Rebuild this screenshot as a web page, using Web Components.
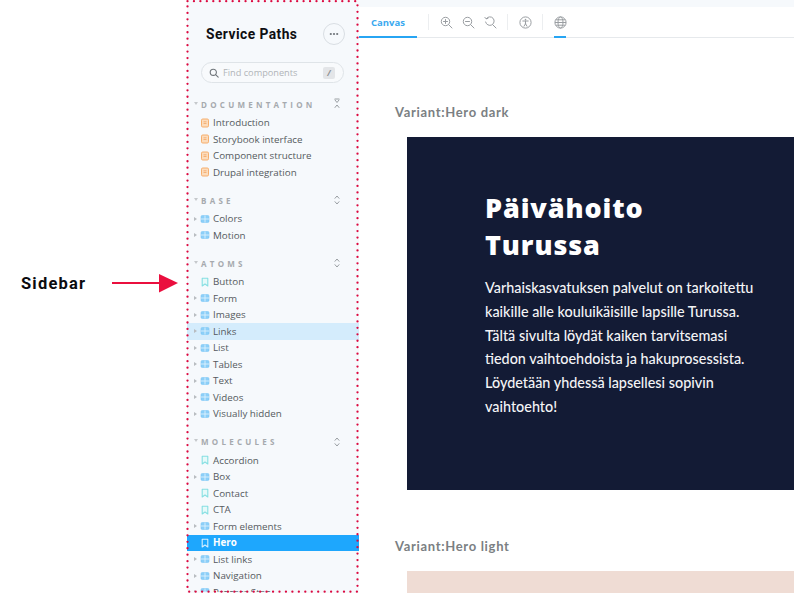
<!DOCTYPE html>
<html lang="fi"><head><meta charset="utf-8"><title>Sidebar</title>
<style>
html,body{margin:0;padding:0;background:#fff}
body{width:794px;height:593px;overflow:hidden;font-family:"Open Sans","Liberation Sans",sans-serif}
</style></head><body>
<sb-page>
  <sb-callout slot="callout">Sidebar</sb-callout>
  <sb-sidebar slot="sidebar" title="Service Paths">
    <sb-section name="Documentation" toggle="collapse">
      <sb-item kind="doc">Introduction</sb-item>
      <sb-item kind="doc">Storybook interface</sb-item>
      <sb-item kind="doc">Component structure</sb-item>
      <sb-item kind="doc">Drupal integration</sb-item>
    </sb-section>
    <sb-section name="Base">
      <sb-item kind="comp">Colors</sb-item>
      <sb-item kind="comp">Motion</sb-item>
    </sb-section>
    <sb-section name="Atoms">
      <sb-item kind="story">Button</sb-item>
      <sb-item kind="comp">Form</sb-item>
      <sb-item kind="comp">Images</sb-item>
      <sb-item kind="comp" state="hover">Links</sb-item>
      <sb-item kind="comp">List</sb-item>
      <sb-item kind="comp">Tables</sb-item>
      <sb-item kind="comp">Text</sb-item>
      <sb-item kind="comp">Videos</sb-item>
      <sb-item kind="comp">Visually hidden</sb-item>
    </sb-section>
    <sb-section name="Molecules">
      <sb-item kind="story">Accordion</sb-item>
      <sb-item kind="comp">Box</sb-item>
      <sb-item kind="story">Contact</sb-item>
      <sb-item kind="story">CTA</sb-item>
      <sb-item kind="comp">Form elements</sb-item>
      <sb-item kind="story" state="active">Hero</sb-item>
      <sb-item kind="comp">List links</sb-item>
      <sb-item kind="comp">Navigation</sb-item>
      <sb-item kind="comp">Process Step</sb-item>
    </sb-section>
  </sb-sidebar>
  <sb-toolbar slot="main"></sb-toolbar>
  <sb-variant slot="main" name="Variant:Hero dark" style="padding-top:66px">
    <sb-hero tone="dark" heading="Päivähoito Turussa">Varhaiskasvatuksen palvelut on tarkoitettu kaikille alle kouluikäisille lapsille Turussa. Tältä sivulta löydät kaiken tarvitsemasi tiedon vaihtoehdoista ja hakuprosessista. Löydetään yhdessä lapsellesi sopivin vaihtoehto!</sb-hero>
  </sb-variant>
  <sb-variant slot="main" name="Variant:Hero light">
    <sb-hero tone="light"></sb-hero>
  </sb-variant>
</sb-page>
<script>
function def(name, html, setup){
  customElements.define(name, class extends HTMLElement{
    connectedCallback(){
      if(this.shadowRoot) return;
      const r=this.attachShadow({mode:'open'});
      r.innerHTML = typeof html==='function' ? html(this) : html;
      if(setup) setup(this,r);
    }
  });
}
def('sb-page',`<style>
:host{display:grid;grid-template-columns:187px 172px 435px;width:794px;height:593px;overflow:hidden}
.main{display:block;min-width:0;overflow:hidden;height:593px}
</style>
<slot name="callout"></slot><slot name="sidebar"></slot><div class="main"><slot name="main"></slot></div>`);

def('sb-callout',`<style>
:host{display:flex;align-items:center;height:593px;box-sizing:border-box;padding:0 9px 0 21px;font:700 16.500px/18px Roboto,"Liberation Sans",sans-serif;color:#0b0b0f;letter-spacing:1.200px}
.w{display:flex;align-items:center;justify-content:space-between;width:100%;transform:translateY(-13px)}
svg{display:block}
</style><div class="w"><span><slot></slot></span>
<svg width="66" height="19" viewBox="1 0 66 19"><path d="M0 8h49V9.900H0z" fill="#ea0f3e"/><path d="M48 0l19 9-19 9.500z" fill="#ea0f3e"/></svg></div>`);

def('sb-sidebar',h=>`<style>
:host{display:block;position:relative;height:593px;overflow:visible;background:#f6f9fc;font-family:"Open Sans","Liberation Sans",sans-serif}
.clip{height:592px;overflow:hidden}
.head{display:flex;align-items:center;justify-content:space-between;height:25px;padding:21px 14px 0 19px}
h1{margin:0;font:700 13.800px/20px Roboto,"Liberation Sans",sans-serif;letter-spacing:.45px;color:#0e0e12}
.more{width:20px;height:20px;border:1px solid #d9dee3;border-radius:50%;display:flex;align-items:center;justify-content:center;box-sizing:content-box;background:#f6f9fc}
.search{display:flex;align-items:center;margin:16px 15px 0 14px;height:19px;border:1px solid #dfe4e8;border-radius:11px;padding:0 8px 0 7px;gap:4px;font-size:9.200px;color:#b0b4b8;background:#f8fafc}
.search span{flex:1;white-space:nowrap}
kbd{width:12px;height:12px;background:#e3e5e8;border-radius:2px;font:700 8px/12px "Open Sans",sans-serif;color:#8b8e92;text-align:center;font-style:italic}
.list{padding-top:12.500px}
svg.frame{position:absolute;left:0;top:0;width:172px;height:593px;pointer-events:none;overflow:visible}
</style>
<div class="clip">
<div class="head"><h1>${h.getAttribute('title')}</h1>
<div class="more"><svg width="10" height="4" viewBox="0 0 10 4"><g fill="#6d7378"><circle cx="1.800" cy="2" r="1.100"/><circle cx="5" cy="2" r="1.100"/><circle cx="8.200" cy="2" r="1.100"/></g></svg></div></div>
<div class="search"><svg width="10" height="10" viewBox="0 0 10 10" fill="none" stroke="#6f757a" stroke-width="1.100"><circle cx="4.300" cy="4.300" r="3.100"/><path d="M6.600 6.600L9.200 9.200" stroke-linecap="round"/></svg><span>Find components</span><kbd>/</kbd></div>
<div class="list"><slot></slot></div>
</div>
<svg class="frame" viewBox="0 0 172 593"><rect x="0.500" y="1.200" width="170" height="590.500" fill="none" stroke="#dc0a40" stroke-width="2.300" stroke-linecap="round" stroke-dasharray="0 6.450"/></svg>`);

def('sb-section',h=>{
  const collapse=h.getAttribute('toggle')==='collapse';
  const path=collapse?'M2 1h4M2 2l2 2.500 2-2.500M2 9.500l2-2.500 2 2.500':'M2 4.300l2-2.300 2 2.300M2 7.700l2 2.300 2-2.300';
  return `<style>
:host{display:block;margin-bottom:11px}
.t{display:flex;align-items:center;height:18px;padding:0 18px 0 7px;margin-bottom:1px}
.c{width:0;height:0;border-left:2.500px solid transparent;border-right:2.500px solid transparent;border-top:3px solid #c5c9cc;margin-right:3px;margin-top:-3px}
b{flex:1;font:700 8px/18px "Open Sans",sans-serif;letter-spacing:3.250px;color:#a6aaae;text-transform:uppercase;white-space:nowrap}
svg{display:block;margin-top:-1px}
</style><div class="t"><i class="c"></i><b>${h.getAttribute('name')}</b><svg width="8" height="12" viewBox="0 0 8 12" fill="none" stroke="#8e9499" stroke-width=".9" stroke-linecap="round" stroke-linejoin="round"><path d="${path}"/></svg></div><slot></slot>`;
});

const ICONS={
 doc:'<rect x="1.500" y="1" width="7" height="8" rx="1.200" fill="#fcdcbc" stroke="#f6ae6c"/><path d="M3.500 3.800h3M3.500 5.500h3" stroke="#f2a664" stroke-width=".8"/>',
 comp:'<rect x="1" y="1.500" width="8" height="7" rx="1.300" fill="#8ccff8" stroke="#7cc8f7" stroke-width=".6"/><path d="M5 1.500v7M1 5h8" stroke="#e6f5fe" stroke-width=".8"/>',
 story:'<path d="M2.200 1.200h5.600v7.800L5 7 2.200 9z" fill="#e6f9f9" stroke="#86dfe2" stroke-width="1.100" stroke-linejoin="round"/>'
};
def('sb-item',h=>{
  const k=h.getAttribute('kind'), s=h.getAttribute('state')||'';
  const active=s==='active';
  let ic=ICONS[k];
  if(active) ic='<path d="M2.200 1.200h5.600v7.800L5 7 2.200 9z" fill="none" stroke="#d5efff" stroke-width="1.100" stroke-linejoin="round"/>';
  return `<style>
:host{display:flex;align-items:center;height:16.500px;width:173px;font-size:9.800px;color:${active?'#fff':'#55595e'};font-weight:${active?700:400};background:${active?'#1ea7fd':s==='hover'?'#d4ecfc':'transparent'};white-space:nowrap}
.car{width:0;height:0;margin-left:7px;margin-right:2.500px;border-top:2.500px solid transparent;border-bottom:2.500px solid transparent;border-left:3px solid ${k==='comp'?'#b8bcc0':'transparent'}}
svg{display:block;margin-right:3.500px}
</style><i class="car"></i><svg width="10" height="10" viewBox="0 0 10 10">${ic}</svg><slot></slot>`;
});

def('sb-toolbar',`<style>
:host{display:block;font-family:"Open Sans",sans-serif}
.strip{height:7px;background:#f6f9fc}
.bar{display:flex;align-items:stretch;height:30px;border-bottom:1px solid #e6e9ec;background:#fff}
.tab{position:relative;width:58px;display:flex;align-items:center;justify-content:center;font-size:9.500px;font-weight:700;color:#3aa9ef}
.tab:after{content:"";position:absolute;left:0;right:0;bottom:-1px;height:2px;background:#27a5f3}
.sep{width:1px;height:16px;background:#eceef0;align-self:center}
.btn{position:relative;width:22px;display:flex;align-items:center;justify-content:center}
.btn.on:after{content:"";position:absolute;left:5px;right:5px;bottom:-1px;height:2px;background:#27a5f3}
svg{display:block}
.g{width:11px}.g2{width:6px}
</style>
<div class="strip"></div>
<div class="bar">
<div class="tab">Canvas</div><div class="g"></div><div class="sep"></div><div class="g2"></div>
<div class="btn"><svg width="13" height="13" viewBox="0 0 13 13" fill="none" stroke="#9a9ea2" stroke-width="1"><circle cx="5.500" cy="5.500" r="4.200"/><path d="M8.600 8.600L12 12M3.500 5.500h4M5.500 3.500v4" stroke-linecap="round"/></svg></div>
<div class="btn"><svg width="13" height="13" viewBox="0 0 13 13" fill="none" stroke="#9a9ea2" stroke-width="1"><circle cx="5.500" cy="5.500" r="4.200"/><path d="M8.600 8.600L12 12M3.500 5.500h4" stroke-linecap="round"/></svg></div>
<div class="btn"><svg width="13" height="13" viewBox="0 0 13 13" fill="none" stroke="#9a9ea2" stroke-width="1"><path d="M2.300 2.600A4.300 4.300 0 1 1 1.600 6M8.800 8.800L12 12M.9 1.400l1.300 1.500 1.800-.6" stroke-linecap="round" stroke-linejoin="round"/></svg></div>
<div class="g2"></div><div class="sep"></div><div class="g2"></div>
<div class="btn"><svg width="13" height="13" viewBox="0 0 13 13" fill="none" stroke="#9a9ea2" stroke-width="1"><circle cx="6.500" cy="6.500" r="5.600"/><circle cx="6.500" cy="3.500" r=".8" fill="#9a9ea2" stroke="none"/><path d="M3.800 5h5.400M6.500 5v2.800M6.500 7.800L5 10.200M6.500 7.800L8 10.200" stroke-linecap="round"/></svg></div>
<div class="g2"></div><div class="sep"></div><div class="g2"></div>
<div class="btn on"><svg width="13" height="13" viewBox="0 0 13 13" fill="none" stroke="#9a9ea2" stroke-width="1"><circle cx="6.500" cy="6.500" r="5.600"/><ellipse cx="6.500" cy="6.500" rx="2.500" ry="5.600"/><path d="M1 6.500h11M1.800 3.800h9.400M1.800 9.200h9.400"/></svg></div>
</div>`);

def('sb-variant',h=>`<style>
:host{display:block;padding:0 0 0 36px;overflow:hidden;font-family:Lato,"Open Sans",sans-serif}
.l{font-size:13px;line-height:16px;font-weight:700;letter-spacing:.68px;color:#7b7f83;padding:0 0 17px}
.b{padding-left:12px}
</style><div class="l">${h.getAttribute('name')}</div><div class="b"><slot></slot></div>`);

def('sb-hero',h=>{
 const dark=h.getAttribute('tone')==='dark';
 const hd=(h.getAttribute('heading')||'');
 return `<style>
:host{display:block;box-sizing:border-box;width:387px;background:${dark?'#131b35':'#efdcd4'};color:#fff;${dark?'height:353px;margin-bottom:48px;padding:52px 30px 0 78px;':'height:60px;'}}
h2{margin:0 0 13px;font:800 27px/37px "Open Sans",Lato,sans-serif;letter-spacing:.9px;width:200px}
p{margin:0;font:500 14.400px/23.800px Lato,"Open Sans",sans-serif;color:#f4f4f6;width:276px}
</style>${dark?`<h2>${hd}</h2><p><slot></slot></p>`:''}`;
});
</script>
</body></html>
